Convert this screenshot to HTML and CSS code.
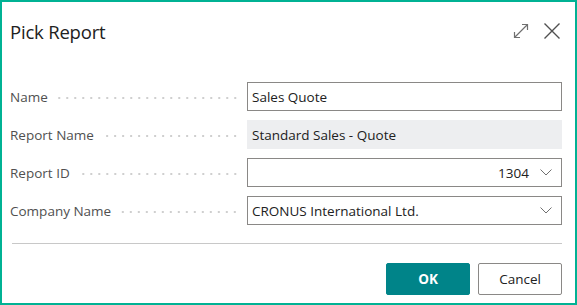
FILE: index.html
```html
<!DOCTYPE html>
<html>
<head>
<meta charset="utf-8">
<link rel="stylesheet" href="styles.css">
</head>
<body>
<div class="dialog">
  <div class="header">
    <div class="title">Pick Report</div>
    <div class="actions">
      <svg class="icon" width="18" height="18" viewBox="0 0 18 18">
        <path d="M2.5 15.5 L15.5 2.5 M10 2.5 H15.5 V8 M2.5 10 V15.5 H8" fill="none" stroke="#707070" stroke-width="1.2"/>
      </svg>
      <svg class="icon" width="18" height="18" viewBox="0 0 18 18">
        <path d="M1.5 1.5 L16.5 16.5 M16.5 1.5 L1.5 16.5" fill="none" stroke="#505050" stroke-width="1.4"/>
      </svg>
    </div>
  </div>
  <div class="form">
    <div class="row">
      <div class="label"><span>Name</span><span class="leader"></span></div>
      <div class="field">Sales Quote</div>
    </div>
    <div class="row">
      <div class="label"><span>Report Name</span><span class="leader"></span></div>
      <div class="field readonly">Standard Sales - Quote</div>
    </div>
    <div class="row">
      <div class="label"><span>Report ID</span><span class="leader"></span></div>
      <div class="field select"><span class="value right">1304</span>
        <svg class="chev" width="12" height="7" viewBox="0 0 12 7"><path d="M0.5 0.5 L6 6 L11.5 0.5" fill="none" stroke="#707070" stroke-width="1"/></svg>
      </div>
    </div>
    <div class="row">
      <div class="label"><span>Company Name</span><span class="leader"></span></div>
      <div class="field select"><span class="value">CRONUS International Ltd.</span>
        <svg class="chev" width="12" height="7" viewBox="0 0 12 7"><path d="M0.5 0.5 L6 6 L11.5 0.5" fill="none" stroke="#707070" stroke-width="1"/></svg>
      </div>
    </div>
  </div>
  <div class="separator"></div>
  <div class="footer">
    <button class="btn primary">OK</button>
    <button class="btn">Cancel</button>
  </div>
</div>
</body>
</html>
```

FILE: styles.css
```css
* { box-sizing: border-box; }
html, body { margin: 0; padding: 0; }
body {
  font-family: "Open Sans", "Noto Sans", "Liberation Sans", sans-serif;
  color: #212121;
  background: #fff;
}
.dialog {
  width: 577px;
  height: 305px;
  border: 2px solid #00b294;
  padding: 0 13px 0 8px;
  display: flex;
  flex-direction: column;
}
.header {
  height: 56px;
  display: flex;
  align-items: center;
  justify-content: space-between;
  padding-top: 3px;
}
.title {
  font-size: 18.5px;
  letter-spacing: -0.2px;
  color: #212121;
}
.actions {
  display: flex;
  gap: 13px;
  align-items: center;
  margin-right: 1px;
  margin-top: -2px;
}
.icon { display: block; }
.form {
  padding-top: 24px;
  display: flex;
  flex-direction: column;
  gap: 9px;
}
.row {
  display: flex;
  height: 29px;
  align-items: center;
}
.label {
  width: 237px;
  flex: none;
  display: flex;
  align-items: center;
  font-size: 13.5px;
  color: #505050;
  gap: 10px;
  padding-right: 8px;
}
.leader {
  flex: 1;
  height: 2px;
  margin-top: 2px;
  background-image: radial-gradient(circle, #cfcfcf 0.9px, transparent 1.1px);
  background-size: 8px 2px;
  background-repeat: repeat-x;
  background-position: right center;
}
.field {
  flex: 1;
  height: 29px;
  border: 1px solid #8a8886;
  display: flex;
  align-items: center;
  padding: 0 8px 0 4px;
  font-size: 13.5px;
  color: #212121;
}
.field.readonly {
  border-color: #edeef0;
  background: #edeef0;
}
.select .value { flex: 1; }
.select .value.right { text-align: right; padding-right: 11px; }
.select .value:not(.right) { padding-right: 8px; }
.chev { display: block; flex: none; margin-right: 1px; }
.separator {
  margin-top: 18px;
  height: 1px;
  background: #c8c8c8;
  margin-left: 2px;
}
.footer {
  display: flex;
  justify-content: flex-end;
  gap: 8px;
  padding-top: 19px;
}
.btn {
  width: 84px;
  height: 32px;
  border-radius: 2px;
  border: 1px solid #8a8886;
  background: #fff;
  font-family: inherit;
  font-size: 13.5px;
  color: #212121;
  padding: 0;
}
.btn.primary {
  background: #008489;
  border-color: #008489;
  color: #fff;
  font-weight: 700;
}
```
